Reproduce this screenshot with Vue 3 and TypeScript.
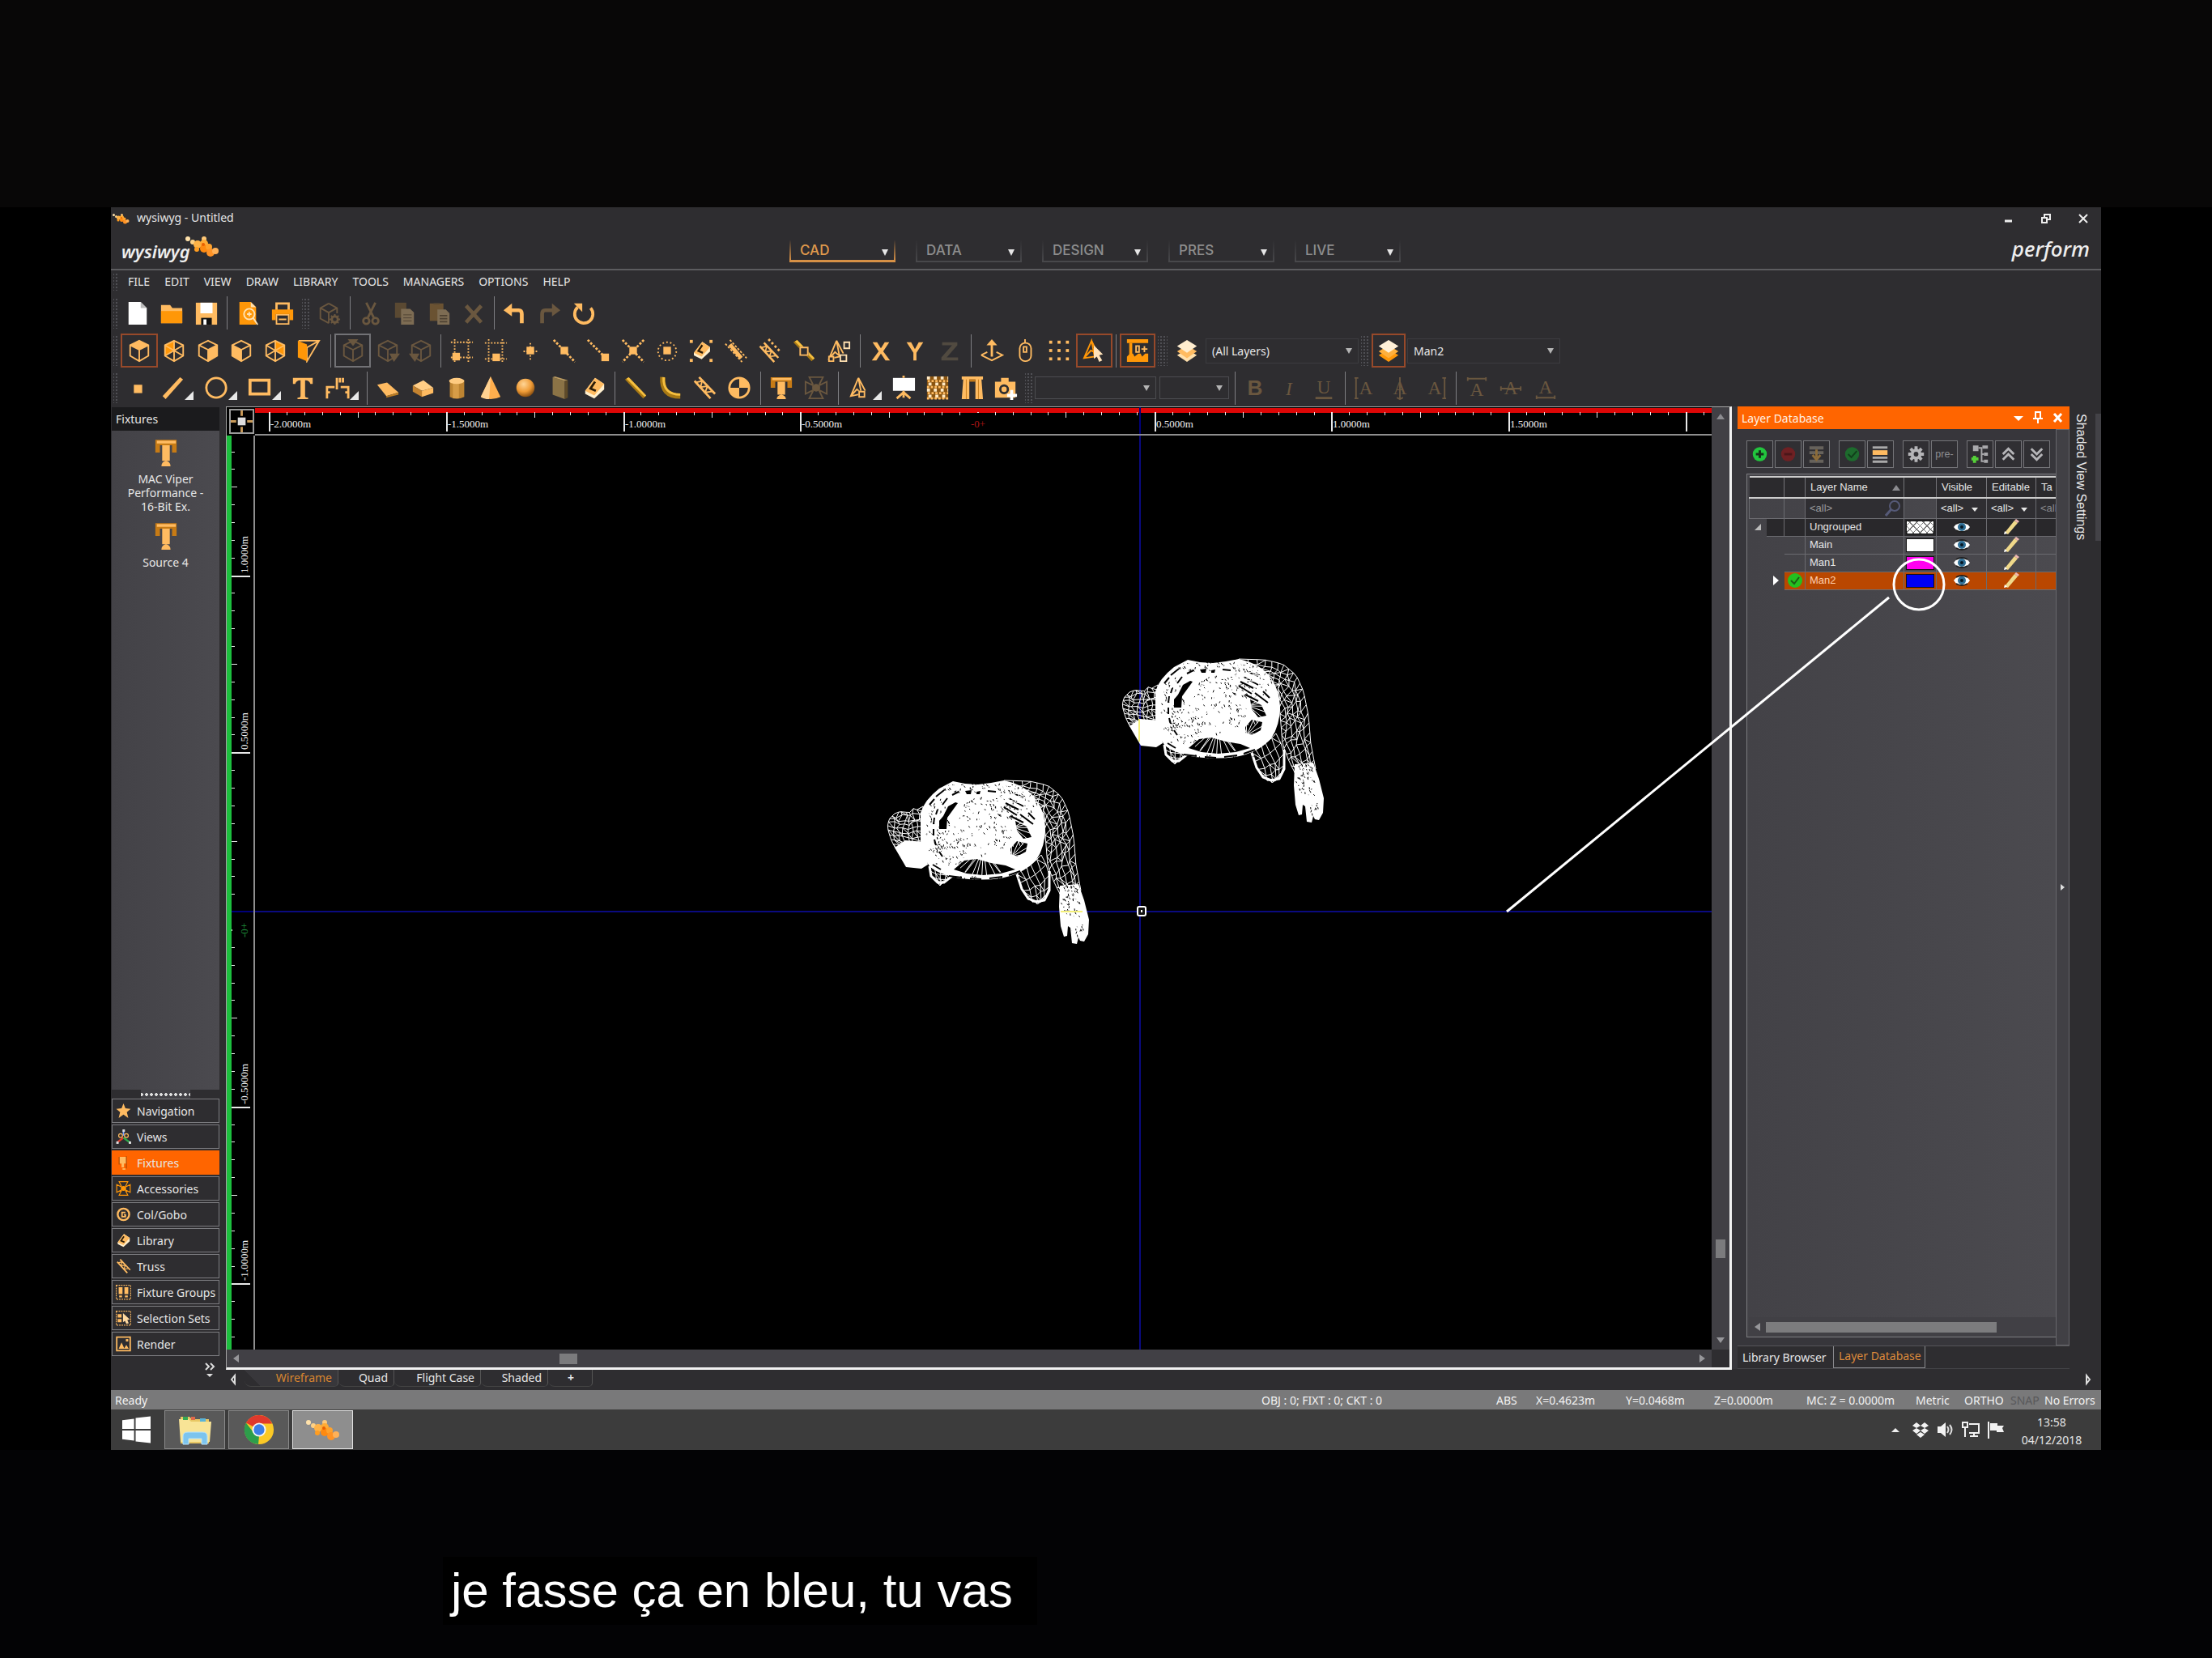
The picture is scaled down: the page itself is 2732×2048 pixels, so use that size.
<script setup lang="ts">
import { ref } from 'vue'

type Point = [number, number]
interface Tool { icon: string; label: string; framed?: string; menu?: boolean }
interface Group { kind: 'tools'; width: number; items: Tool[] }
interface Rule { kind: 'rule'; width: number }
interface Grip { kind: 'grip'; width: number }
interface Combo { kind: 'combo'; width: number; value: string; label: string; tall?: boolean }
type Entry = Group | Rule | Grip | Combo

const A = '#ffbb61'
const O = '#ff9708'
const G = '#6a573f'
const BG = '#2e2d30'

const stroke = (d: string, c = A, w = 2) => `<path d="${d}" fill="none" stroke="${c}" stroke-width="${w}"/>`
const fill = (d: string, c = A) => `<path d="${d}" fill="${c}"/>`
const dash = (d: string, c = A, w = 2, p = '2 2') => `<path d="${d}" fill="none" stroke="${c}" stroke-width="${w}" stroke-dasharray="${p}"/>`
const sq = (x: number, y: number, s = 10, c = A) => `<rect x="${x}" y="${y}" width="${s}" height="${s}" fill="${c}"/>`
const glyph = (t: string, c = G, y = 25, extra = '') => `<text x="16" y="${y}" text-anchor="middle" font-size="25" font-family="Liberation Serif, serif" fill="${c}" ${extra}>${t}</text>`

const hex = 'M16 3 28 9V23L16 30 4 23V9Z'
const cube = (face: string, c = A) => (face ? fill(face, c) : '') + stroke(hex + 'M4 9 16 15 28 9M16 15V30', c)
const wire = (face: string) => fill(face, O) + stroke(hex + 'M4 9 28 23M28 9 4 23M16 3V30', A)
const book = fill('M4 20 17 3 29 11V18L16 30 4 24Z', '#fff0cf') + fill('M4 20 17 3 29 11 16 26Z', A) + stroke('M17 8 11 17 18 20', '#2b1c08', 3)
const beam = fill('M2 5 7 2 30 26 26 30Z', '#a87914') + fill('M4 4 7 2 30 26 28 28Z', '#f5bf3f')
const truss = stroke('M3 7 24 30M9 2 30 24', A, 3) + stroke('M5 9 13 7 11 15 20 14 17 22 26 21', A, 2)
const lamp = fill('M2 2H30V16H24V8H8V16H2Z', '#c77b15') + fill('M4 3H29V6H4Z', A) + fill('M11 8H21V25H11ZM10 31Q10 26 16 25 22 26 22 31Z', A)
const iris = (c: string) => stroke('M12 12 7 2H25L20 12M20 20 25 30H7L12 20M2 8 12 13V19L2 24ZM30 8 20 13V19L30 24Z', c) + `<circle cx="16" cy="16" r="5" fill="${c}"/>`
const cone = stroke('M13 3 3 27 17 24 13 3 22 20M3 27 11 18 18 24', A)
const layers = (top: string, low: string) => fill('M16 14 29 22 16 31 3 22Z', low) + fill('M16 9 29 17 16 26 3 17Z', low === O ? '#ffb03d' : A) + fill('M16 2 29 10 16 19 3 10Z', top)
const splash = `<g><circle cx="3" cy="5" r="3" fill="#ffe2ab"/><circle cx="9" cy="9" r="3" fill="#ffd184"/><circle cx="23" cy="5" r="3" fill="#ffc877"/><circle cx="15" cy="12" r="5" fill="#ffb347"/><circle cx="23" cy="11" r="5" fill="#ffab35"/><circle cx="14" cy="18" r="3" fill="#ff9d20"/><circle cx="23" cy="17" r="5" fill="#ff8a10"/><circle cx="29" cy="15" r="4" fill="#ffa22c"/><circle cx="31" cy="22" r="5" fill="#ff9326"/><circle cx="37" cy="20" r="4" fill="#ffb158"/><circle cx="22" cy="12" r="2" fill="#e85f00"/></g>`

const icons: Record<string, string> = {
  new: fill('M4 1H20L28 9V31H4Z', '#fff') + fill('M20 1 28 9H20Z', '#bbb'),
  open: fill('M2 5H14L17 9H30V29H2Z', A) + fill('M2 13H30V29H2Z', O),
  save: fill('M2 2H30V31H2Z', A) + fill('M8 2H24V16H8Z', '#fff') + fill('M9 22H23V31H9Z', '#111') + fill('M12 24H16V31H12Z', '#fff'),
  preview: fill('M5 1H20L27 8V31H5Z', O) + fill('M20 1 27 8H20Z', '#ffe0ad') + `<circle cx="18" cy="17" r="7" fill="none" stroke="#ffe3b5" stroke-width="2"/>` + stroke('M15 17H21M18 14V20M23 22 29 31', '#ffe3b5'),
  print: stroke('M8 12V3H24V12', A, 3) + fill('M2 11H30V25H2Z', O) + fill('M7 17H25V31H7Z', BG) + stroke('M8 18H24V30H8ZM11 24H21', A),
  cubegear: stroke('M16 3 27 9V16M16 3 5 9V23L16 29M5 9 16 15 27 9M16 15V29', G) + `<circle cx="24" cy="24" r="4" fill="none" stroke="${G}" stroke-width="3"/>` + dash('M24 17V31M17 24H31M19 19 29 29M29 19 19 29', G, 2, '3 8'),
  cut: stroke('M10 2 20 22M22 2 12 22', G, 3) + `<circle cx="10" cy="26" r="4" fill="none" stroke="${G}" stroke-width="3"/><circle cx="22" cy="26" r="4" fill="none" stroke="${G}" stroke-width="3"/>`,
  copy: fill('M3 2H18V22H3Z', '#5a4932') + fill('M11 10H23L28 15V31H11Z', '#7d6c53') + stroke('M14 18H25M14 22H25M14 26H25', '#4d4132', 1),
  paste: fill('M3 3H21V26H3Z', '#6a5232') + fill('M13 11H24L29 16V31H13Z', '#7d6c53') + stroke('M16 19H26M16 23H26M16 27H26M8 3H16', '#4d4132', 2),
  remove: stroke('M6 6 26 28M26 6 6 28', G, 5),
  undo: fill('M1 12 12 3V20Z') + stroke('M10 12H21Q25 12 25 17V29', A, 5),
  redo: fill('M31 12 20 3V20Z', G) + stroke('M22 12H11Q7 12 7 17V29', G, 5),
  repeat: stroke('M8 8A12 12 0 1 0 25 9', A, 4) + fill('M3 3H14V14Z'),
  top: cube('M16 3 28 9 16 15 4 9Z'),
  left: wire('M4 9 16 3V15L4 23Z'),
  front: cube('M16 15 28 9V23L16 30Z'),
  side: cube('M4 9 16 15V30L4 23Z'),
  back: wire('M28 9 16 3V15L28 23Z'),
  persp: stroke('M3 3H30L14 30V12L30 3', A) + fill('M2 3 14 8V30L2 25Z', O),
  cubetop: cube('', G) + fill('M9 1H23L16 10Z', G),
  cubefront: cube('', G) + fill('M18 20H32L24 31Z', G),
  cubeback: cube('', G) + fill('M14 20H0L8 31Z', G),
  snapall: dash('M2 5H31M7 1V31M25 1V31M2 25H31') + sq(4, 19),
  snapin: dash('M2 6H31M7 1V31M25 1V31M2 27H31') + sq(12, 20),
  snappt: dash('M16 6V28M7 17H26') + sq(11, 11),
  snapmid: dash('M2 2 30 31', A, 3, '3 2') + sq(11, 11),
  snapend: dash('M2 2 24 24', A, 3, '3 2') + sq(20, 20),
  snapx: dash('M2 2 30 31M30 2 2 31', A, 3, '3 2') + sq(11, 11),
  snapring: `<circle cx="16" cy="17" r="12" fill="none" stroke="${A}" stroke-width="2" stroke-dasharray="2 3"/>` + sq(11, 11),
  snaplib: `<g transform="translate(3 2) scale(.85)">${book}</g>` + sq(1, 2, 4) + sq(27, 2, 4) + sq(1, 27, 4) + sq(27, 27, 4),
  snapline: stroke('M8 8 23 26', A, 5) + dash('M8 2 30 26M2 7 24 31', A, 2, '3 2'),
  snaptruss: `<g transform="translate(0 4) scale(.9)">${truss}</g>` + dash('M14 1 30 18', A, 3, '3 3'),
  snapbeam: beam + fill('M10 11H22V23H10Z', BG) + stroke('M11 12H21V22H11Z', A, 2),
  snapcone: cone + fill('M18 20H28V30H18ZM2 24H10V31H2Z', BG) + stroke('M3 24H9V30H3Z') + stroke('M23 5H30V13H23ZM18 22H26V30H18Z', '#ffe0b0'),
  x: fill('M5 5H11L16 13 21 5H27L19 17 28 29H22L16 20 10 29H4L13 17Z'),
  y: fill('M5 5H11L16 14 21 5H27L18 19V29H14V19Z'),
  z: fill('M6 5H26V9L12 25H27V29H5V25L19 9H6Z', '#514a40'),
  raise: stroke('M16 6V24', A, 3) + fill('M9 9 16 1 23 9Z') + stroke('M2 22 10 18M22 18 30 22 16 29 2 22'),
  mouse: '<rect x="9" y="6" width="15" height="24" rx="7" fill="none" stroke="#ffbb61" stroke-width="2"/>' + stroke('M16 1V6M14 11H18V18H14Z'),
  grid: [3, 14, 25].map(y => [3, 14, 25].map(x => sq(x, y, 4)).join('')).join(''),
  pick: stroke('M13 3 3 26 17 24ZM3 26 12 16 19 19M13 3 20 18', O) + fill('M16 9 28 21 23 22 27 29 23 31 20 24 16 27Z', '#ffe2b8'),
  measure: fill('M2 1H30V6H2ZM2 24 6 20H10L12 24 17 20H20L22 24 26 20H30V31H2Z', O) + fill('M5 6H9V24H5Z', O) + stroke('M14 10H18V18H14ZM21 14H29M25 10V18'),
  layersall: layers('#ffedcf', '#ffe0ac'),
  layersone: layers('#fff0d8', O),
  dot: sq(11, 12, 11),
  line: fill('M3 27 26 2 30 5 7 31Z'),
  circle: '<ellipse cx="16" cy="16" rx="13" ry="13" fill="none" stroke="#ffbb61" stroke-width="3"/>',
  rect: stroke('M3 6H28V24H3Z', A, 4),
  text: fill('M3 3H29V11H26Q25 6 19 6V27Q19 29 23 29V31H9V29Q13 29 13 27V6Q7 6 6 11H3Z'),
  dims: stroke('M2 30V15H12M20 15H30V30M2 22H6M26 22H30M15 3V18M19 3V9M23 3V9', A, 3),
  floor: fill('M2 12 15 9 30 22 14 27Z') + fill('M14 27 30 22V25L14 29Z', '#b97b24'),
  box: fill('M3 13 17 6 30 16 15 20Z', '#ffcd86') + fill('M3 13 15 20V28L3 21Z', '#c48330') + fill('M15 20 30 16V23L15 28Z', A),
  cyl: fill('M7 6H26V28Q16 33 7 28Z', '#bd8432') + fill('M11 6H19V30H11Z', '#d69c47') + '<ellipse cx="16" cy="7" rx="10" ry="4" fill="#ffcb80"/>',
  cone3: fill('M16 1 29 28Q16 34 3 28Z', '#ffae4d') + fill('M16 1 14 31Q7 31 3 28Z', '#ffd292'),
  ball: '<defs><radialGradient id="ballshade" cx=".4" cy=".3" r=".7"><stop offset="0" stop-color="#ffd596"/><stop offset=".6" stop-color="#ef9b36"/><stop offset="1" stop-color="#8d5212"/></radialGradient></defs><circle cx="16" cy="16" r="12" fill="url(#ballshade)"/>',
  wall: fill('M7 2 23 7V31L7 25Z', '#8b7346') + fill('M7 2 10 1 27 6 23 7Z', '#bd9d62') + fill('M23 7 27 6V29L23 31Z', '#5e4a28'),
  book,
  pipe: beam,
  curve: stroke('M6 2Q4 27 29 27', '#a87914', 7) + stroke('M7 2Q6 25 29 25', '#f5bf3f', 3),
  truss,
  quad: '<circle cx="16" cy="16" r="13" fill="#2e2d30" stroke="#ffbb61" stroke-width="3"/>' + fill('M16 3A13 13 0 0 1 29 16H16ZM16 29A13 13 0 0 1 3 16H16Z'),
  lamp,
  iris: iris(G),
  focus: cone + fill('M13 20H23V30H13Z', BG) + stroke('M14 21H21V28H14Z'),
  screen: fill('M2 3H31V20H2Z', '#fff') + stroke('M16 20V29M16 22 7 30M16 22 25 30M16 0V3', A, 3),
  fabric: fill('M2 1H30V31H2Z', '#8a5410') + dash('M2 3H30M4 11H30M2 19H30M4 27H30', '#ffe9c4', 4, '4 5') + dash('M3 7H30M2 15H30M3 23H30M2 30H30', A, 3, '3 2'),
  drape: fill('M3 1H31V5H3ZM5 5H13V31H3ZM21 5H29L31 31H21Z') + fill('M13 5H21V8H13Z', '#c47b1a') + stroke('M9 5V31M25 5V31', '#c47b1a', 1),
  camera: fill('M2 8H10V3H20V8H29V29H2Z') + '<ellipse cx="14" cy="18" rx="5" ry="5" fill="none" stroke="#2e2d30" stroke-width="3"/>' + stroke('M24 19V32M18 26H31', '#fff', 4),
  bold: `<text x="16" y="26" text-anchor="middle" font-size="28" font-weight="700" font-family="Liberation Sans, sans-serif" fill="${G}">B</text>`,
  italic: glyph('I', G, 26, 'font-style="italic"'),
  under: glyph('U', G, 23) + fill('M5 28H27V31H5Z', G),
  alignl: glyph('A') + stroke('M3 3V30M1 3H6M1 30H6', G),
  alignc: glyph('A') + stroke('M16 2V31M12 29 16 31 20 29', G),
  alignr: glyph('A') + stroke('M29 3V30M26 3H31M26 30H31', G),
  vtop: glyph('A', G, 27) + stroke('M4 4H28M4 2V7M28 2V7', G),
  vmid: glyph('A') + stroke('M3 17H29M3 14V20M29 14V20', G),
  vbot: glyph('A', G, 23) + stroke('M4 29H28M4 26V31M28 26V31', G),
  star: fill('M16 1 20 11 31 12 23 19 26 31 16 24 6 31 9 19 1 12 12 11Z'),
  axes: stroke('M16 14V3', '#7da5ff', 3) + stroke('M16 18 3 28', '#e23b2b', 4) + stroke('M16 18 29 28', '#2ca84a', 4) + '<circle cx="10" cy="14" r="4" fill="none" stroke="#ffbb61" stroke-width="2"/><circle cx="22" cy="14" r="4" fill="none" stroke="#ffbb61" stroke-width="2"/>' + sq(1, 26, 5, '#ddd') + sq(27, 26, 5, '#ddd') + sq(14, 1, 5, '#ddd'),
  lampsmall: fill('M7 4H22V18H17V26H12V18H7Z', A) + stroke('M7 4V20M22 3V28', '#b04a00', 2) + fill('M14 28H20V31H14Z'),
  irisA: iris(O),
  gobo: `<circle cx="16" cy="16" r="12" fill="none" stroke="${A}" stroke-width="4"/>` + stroke('M20 12H13V21H20V17H17', A, 3),
  groups: dash('M1 2H31V31H1Z', A, 2, '3 2') + fill('M6 6H14V20H6ZM18 6H26V20H18ZM7 23H13V27H7ZM19 23H25V27H19Z'),
  sets: dash('M1 2H31V31H1Z', A, 2, '3 2') + fill('M4 8H12V15H4ZM4 18H12V25H4Z') + fill('M15 6 29 19 24 20 27 27 22 28 19 22 15 25Z', '#ffd9a0'),
  render: stroke('M2 2H30V30H2Z', A, 3) + fill('M6 26 12 13 18 26ZM17 26 22 18 27 26Z') + sq(21, 6, 5),
}

const t = (icon: string, label: string, opt: Partial<Tool> = {}): Tool => ({ icon, label, ...opt })
const group = (width: number, ...items: Tool[]): Group => ({ kind: 'tools', width, items })
const rule = (width: number): Rule => ({ kind: 'rule', width })
const grip = (width: number): Grip => ({ kind: 'grip', width })

const toolbars: { name: string; entries: Entry[] }[] = [
  {
    name: 'standard', entries: [
      group(127, t('new', 'New'), t('open', 'Open'), t('save', 'Save')), rule(9),
      group(85, t('preview', 'Preview'), t('print', 'Print')), grip(15),
      group(42, t('cubegear', 'Object settings')), rule(10),
      group(169, t('cut', 'Cut'), t('copy', 'Copy'), t('paste', 'Paste'), t('remove', 'Delete')), rule(9),
      group(127, t('undo', 'Undo'), t('redo', 'Redo'), t('repeat', 'Repeat')),
    ],
  },
  {
    name: 'snapping', entries: [
      group(253, t('top', 'Top', { framed: 'hot' }), t('left', 'Left'), t('front', 'Front'), t('side', 'Right'), t('back', 'Back'), t('persp', 'Perspective')), rule(11),
      group(127, t('cubetop', 'Align top', { framed: 'cold' }), t('cubefront', 'Align front'), t('cubeback', 'Align back')), rule(9),
      group(508, t('snapall', 'Snap grid'), t('snapin', 'Snap inside'), t('snappt', 'Snap point'), t('snapmid', 'Snap middle'), t('snapend', 'Snap end'), t('snapx', 'Snap crossing'), t('snapring', 'Snap centre'), t('snaplib', 'Snap library'), t('snapline', 'Snap line'), t('snaptruss', 'Snap truss'), t('snapbeam', 'Snap pipe'), t('snapcone', 'Snap focus')), rule(10),
      group(127, t('x', 'Lock X'), t('y', 'Lock Y'), t('z', 'Lock Z')), rule(10),
      group(170, t('raise', 'Raise'), t('mouse', 'Mouse'), t('grid', 'Grid'), t('pick', 'Pick', { framed: 'hot' })), rule(9),
      group(44, t('measure', 'Rulers', { framed: 'hot' })), grip(18),
      group(42, t('layersall', 'Layers')),
      { kind: 'combo', width: 189, value: '(All Layers)', label: 'Shown layers', tall: true }, grip(16),
      group(42, t('layersone', 'Current layer', { framed: 'hot' })),
      { kind: 'combo', width: 189, value: 'Man2', label: 'Current layer', tall: true },
    ],
  },
  {
    name: 'draw', entries: [
      group(42, t('dot', 'Point')),
      group(162, t('line', 'Line', { menu: true }), t('circle', 'Circle', { menu: true }), t('rect', 'Rectangle', { menu: true })),
      group(42, t('text', 'Text')),
      group(54, t('dims', 'Dimension', { menu: true })), rule(9),
      group(297, t('floor', 'Surface'), t('box', 'Box'), t('cyl', 'Cylinder'), t('cone3', 'Cone'), t('ball', 'Sphere'), t('wall', 'Wall'), t('book', 'Library')), rule(9),
      group(170, t('pipe', 'Pipe'), t('curve', 'Bent pipe'), t('truss', 'Truss'), t('quad', 'Motor')), rule(10),
      group(85, t('lamp', 'Fixture'), t('iris', 'Accessory')), rule(12),
      group(54, t('focus', 'Focus', { menu: true })),
      group(168, t('screen', 'Screen'), t('fabric', 'Fabric'), t('drape', 'Drape'), t('camera', 'Camera')), grip(15),
      { kind: 'combo', width: 150, value: '', label: 'Font' },
      { kind: 'combo', width: 86, value: '', label: 'Font size' }, rule(7),
      group(127, t('bold', 'Bold'), t('italic', 'Italic'), t('under', 'Underline')), rule(10),
      group(127, t('alignl', 'Align left'), t('alignc', 'Align centre'), t('alignr', 'Align right')), rule(10),
      group(127, t('vtop', 'Align top'), t('vmid', 'Align middle'), t('vbot', 'Align bottom')),
    ],
  },
]

const modes = ['CAD', 'DATA', 'DESIGN', 'PRES', 'LIVE']
const activeMode = ref('CAD')
const menus = ['FILE', 'EDIT', 'VIEW', 'DRAW', 'LIBRARY', 'TOOLS', 'MANAGERS', 'OPTIONS', 'HELP']
const shortcuts: [string, string][] = [
  ['Navigation', 'star'], ['Views', 'axes'], ['Fixtures', 'lampsmall'], ['Accessories', 'irisA'], ['Col/Gobo', 'gobo'],
  ['Library', 'book'], ['Truss', 'truss'], ['Fixture Groups', 'groups'], ['Selection Sets', 'sets'], ['Render', 'render'],
]
const activeShortcut = ref('Fixtures')
const views: [string, number][] = [['Wireframe', 116], ['Quad', 69], ['Flight Case', 107], ['Shaded', 83], ['+', 55]]
const activeView = ref('Wireframe')
const status: [string, number][] = [
  ['OBJ : 0; FIXT : 0; CKT : 0', 290], ['ABS', 49], ['X=0.4623m', 111], ['Y=0.0468m', 109], ['Z=0.0000m', 114],
  ['MC: Z = 0.0000m', 135], ['Metric', 60], ['ORTHO', 57], ['SNAP', 42], ['No Errors', 70],
]

const layerRows = [
  { name: 'Ungrouped', fill: 'hatch', kind: 'head' },
  { name: 'Main', fill: 'white', kind: '' },
  { name: 'Man1', fill: 'magenta', kind: '' },
  { name: 'Man2', fill: 'blue', kind: 'current' },
]
const panelGroups: { name: string; art: string }[][] = [
  [
    { name: 'Add layer', art: '<circle cx="16" cy="16" r="9" fill="#22c53e"/><path d="M11 16H21M16 11V21" stroke="#17301b" stroke-width="3"/>' },
    { name: 'Remove layer', art: '<circle cx="16" cy="16" r="9" fill="#6f2023"/><path d="M11 16H21" stroke="#4a1719" stroke-width="3"/>' },
    { name: 'Merge layers', art: '<path d="M7 6H25V10H7ZM7 12H25V16H7ZM7 23H25V27H7Z" fill="#66625c"/><path d="M16 10V20M11 17 16 23 21 17" fill="none" stroke="#8c6c3a" stroke-width="3"/>' },
  ],
  [
    { name: 'Set current', art: '<circle cx="16" cy="16" r="9" fill="#1d6b2d"/><path d="M11 16 15 20 22 12" fill="none" stroke="#123d1b" stroke-width="2"/>' },
    { name: 'Group layers', art: '<path d="M6 6H25V9H6Z" fill="#aaa"/><path d="M6 11H25V17H6Z" fill="#ffbb61"/><path d="M6 19H25V22H6ZM6 24H25V27H6Z" fill="#aaa"/>' },
  ],
  [
    { name: 'Settings', art: '<circle cx="16" cy="16" r="5" fill="none" stroke="#b5b5b8" stroke-width="4"/><path d="M16 6V10M16 22V26M6 16H10M22 16H26M9 9 12 12M20 20 23 23M23 9 20 12M12 20 9 23" stroke="#b5b5b8" stroke-width="4"/>' },
    { name: 'Prefix', art: '<text x="16" y="20" text-anchor="middle" font-size="13" font-family="Liberation Sans, sans-serif" fill="#8d8d90">pre-</text>' },
  ],
  [
    { name: 'New group', art: '<path d="M7 5H14V12H7ZM19 5H26V9H19ZM21 14H26V18H21ZM21 23H26V27H21Z" fill="#a9a9ac"/><path d="M14 8H18V25H21M18 16H21" fill="none" stroke="#a9a9ac" stroke-width="2"/><path d="M5 22H14M9 18V27" stroke="#55d038" stroke-width="4"/>' },
    { name: 'Collapse all', art: '<path d="M9 16 16 9 23 16M9 23 16 16 23 23" fill="none" stroke="#b5b5b8" stroke-width="3"/>' },
    { name: 'Expand all', art: '<path d="M9 9 16 16 23 9M9 16 16 23 23 16" fill="none" stroke="#b5b5b8" stroke-width="3"/>' },
  ],
]

// Rulers: half a metre spans STEP pixels and holds ten divisions.
const STEP = 218.7
const zeroX = 892
const zeroY = 610
const rulerX: { x: number; h: number }[] = []
for (let i = -40; i <= 42; i++) rulerX.push({ x: Math.round(zeroX + (i * STEP) / 10), h: i % 10 === 0 ? 24 : i % 5 === 0 ? 7 : 4 })
const rulerY: { y: number; w: number }[] = []
for (let i = -28; i <= 24; i++) rulerY.push({ y: Math.round(zeroY + (i * STEP) / 10), w: i % 10 === 0 ? 23 : i % 5 === 0 ? 7 : 4 })
const labelsX = [-2, -1.5, -1, -0.5, 0.5, 1, 1.5].map(v => ({ x: Math.round(zeroX + v * 2 * STEP), s: v.toFixed(4) + 'm' }))
const labelsY = [1, 0.5, -0.5, -1].map(v => ({ y: Math.round(zeroY - v * 2 * STEP), s: v.toFixed(4) + 'm' }))

// Wireframe figure seen from above.
let seed = 7
const rnd = () => { seed = (seed * 16807) % 2147483647; return seed / 2147483647 }
const along = (line: Point[], u: number): Point => {
  const f = u * (line.length - 1)
  const i = Math.min(Math.floor(f), line.length - 2)
  const k = f - i
  return [line[i][0] + (line[i + 1][0] - line[i][0]) * k, line[i][1] + (line[i + 1][1] - line[i][1]) * k]
}
const mesh = (a: Point[], b: Point[], cols: number, rows: number, jitter: number): string => {
  const pts: Point[][] = []
  for (let r = 0; r <= rows; r++) {
    const p = along(a, r / rows)
    const q = along(b, r / rows)
    const row: Point[] = []
    for (let c = 0; c <= cols; c++) {
      const k = c / cols
      const j = c === 0 || c === cols ? 0 : jitter
      row.push([p[0] + (q[0] - p[0]) * k + (rnd() - 0.5) * j, p[1] + (q[1] - p[1]) * k + Math.sin(k * 3.14) * 3 + (rnd() - 0.5) * j])
    }
    pts.push(row)
  }
  const s = (p: Point) => p[0].toFixed(1) + ' ' + p[1].toFixed(1)
  let d = pts.map(r => 'M' + r.map(s).join('L')).join('')
  for (let c = 0; c <= cols; c++) d += 'M' + pts.map(r => s(r[c])).join('L')
  for (let r = 0; r < rows; r++) for (let c = 0; c < cols; c++) if (rnd() > 0.62) d += 'M' + s(pts[r][c]) + 'L' + s(pts[r + 1][c + 1])
  return d
}
const specks = (cx: number, cy: number, rx: number, ry: number, n: number): string => {
  let d = ''
  for (let i = 0; i < n; i++) {
    const a = rnd() * 6.283
    const k = Math.sqrt(rnd())
    d += `M${(cx + Math.cos(a) * rx * k).toFixed(1)} ${(cy + Math.sin(a) * ry * k).toFixed(1)}l${(rnd() * 3 - 1).toFixed(1)} ${(rnd() * 3).toFixed(1)}`
  }
  return d
}
const fan = (x: number, y: number, r0: number, r1: number, a0: number, a1: number, n: number, fy = 1): string => {
  let d = ''
  for (let i = 0; i <= n; i++) {
    const a = a0 + ((a1 - a0) * i) / n
    const b = a + (rnd() - 0.5) * 0.18
    d += `M${(x + Math.cos(a) * r0).toFixed(1)} ${(y + Math.sin(a) * r0 * fy).toFixed(1)}L${(x + Math.cos(b) * r1).toFixed(1)} ${(y + Math.sin(b) * r1 * fy).toFixed(1)}`
  }
  return d
}
const armMesh = mesh(
  [[140, 24], [166, 28], [186, 40], [194, 56], [196, 80], [198, 105], [206, 126], [216, 146]],
  [[144, 0], [176, 1], [198, 6], [215, 20], [224, 40], [230, 70], [233, 105], [239, 136]], 6, 20, 5)
const shoulderMesh = mesh([[9, 41], [2, 48], [0, 58], [4, 72], [10, 84]], [[44, 32], [44, 46], [44, 60], [44, 74], [44, 88]], 7, 9, 5)
const footMesh = mesh([[52, 106], [54, 118], [62, 127]], [[82, 108], [76, 122], [68, 127]], 4, 4, 2)
const legMesh = mesh([[160, 116], [166, 134], [174, 146], [182, 150]], [[190, 92], [200, 112], [200, 136], [190, 150]], 5, 5, 4)
const torso = 'M41 40Q46 24 64 10L81 1 96 4 112 5 128 3 144 0Q172 6 184 24 194 38 195 58 195 82 184 98 168 116 140 121 118 124 90 121 62 116 52 106 40 90 41 70Z'
const holes = 'M84 27 75 32 69 44 64 50 64 60 73 60 74 46 87 28ZM158 50 172 57 178 70 168 72 160 62ZM152 84 160 75 173 78 171 88 160 94 152 91ZM82 110 95 99 110 97 128 102 146 105 158 110 140 115 118 117 98 115ZM96 13 104 12 103 17 98 17ZM110 14 115 13 114 17 110 17Z'
const gaps = 'M60 42 62 36M57 54 58 46M57 68 57 60M60 80 58 73M68 94 64 88M68 30 74 22M80 18 88 14M124 13 134 14M150 22 168 32M146 28 162 36M144 33 160 43M152 44 168 52M164 42 180 54M174 40 182 48M156 16 168 21M60 20 70 12M52 30 58 23M56 104 66 110M76 118 92 120M102 121 116 122M126 121 142 119M150 117 164 112'
const spokes = fan(118, 84, 12, 38, 0.35, 2.8, 14, 0.95) + fan(156, 58, 0, 24, -0.5, 1.6, 7) + fan(154, 94, 0, 24, -1.9, 0.1, 6)
const headSpecks = specks(118, 56, 38, 38, 120) + specks(62, 62, 14, 42, 70) + specks(118, 9, 52, 6, 50) + specks(158, 30, 28, 18, 60) + specks(80, 88, 22, 18, 50) + specks(118, 120, 50, 2, 14)
const hand = 'M213 130 236 128 243 148 249 172 248 190 243 199 238 198 236 194 234 202 228 201 226 182 223 180 222 192 218 193 214 180 212 156Z'
const handSpecks = specks(226, 146, 12, 20, 54) + specks(236, 178, 9, 14, 14)
const figures: Point[] = [[1071, 276], [781, 426]]
</script>

<template>
  <div class="page">
    <main class="window">
      <header class="titlebar">
        <svg class="appicon" viewBox="0 0 42 28" v-html="splash" />
        <h1>wysiwyg - Untitled</h1>
        <button aria-label="Minimise"><svg viewBox="0 0 16 16"><path d="M3 11H12" stroke="#eee" stroke-width="3" /></svg></button>
        <button aria-label="Restore"><svg viewBox="0 0 16 16"><path d="M6 6V3H13V9H10M3 7H9V13H3Z" fill="none" stroke="#eee" stroke-width="2" /></svg></button>
        <button aria-label="Close"><svg viewBox="0 0 16 16"><path d="M3 3 13 13M13 3 3 13" stroke="#eee" stroke-width="2" /></svg></button>
      </header>
      <div class="brand">
        <div class="logo"><span>wysiwyg</span><svg viewBox="0 0 42 28" v-html="splash" /></div>
        <nav class="modes">
          <button v-for="m in modes" :key="m" :class="{ on: m === activeMode }" @click="activeMode = m">{{ m }}<i class="down" /></button>
        </nav>
        <span class="edition">perform</span>
      </div>
      <nav class="menubar">
        <i class="grip" />
        <button v-for="m in menus" :key="m">{{ m }}</button>
      </nav>
      <div v-for="bar in toolbars" :key="bar.name" class="toolbar" :class="bar.name">
        <i class="grip" />
        <template v-for="(e, n) in bar.entries" :key="n">
          <div v-if="e.kind === 'tools'" class="tools" :style="{ width: e.width + 'px' }">
            <button v-for="b in e.items" :key="b.icon" :aria-label="b.label" :class="[b.framed, { menu: b.menu }]">
              <svg viewBox="0 0 32 32" v-html="icons[b.icon]" />
            </button>
          </div>
          <i v-else-if="e.kind === 'rule'" class="rule" :style="{ width: e.width + 'px' }" />
          <i v-else-if="e.kind === 'grip'" class="grip" :style="{ width: e.width + 'px' }" />
          <label v-else class="combo" :class="{ tall: e.tall }" :style="{ width: e.width + 'px' }">
            <select :aria-label="e.label"><option>{{ e.value }}</option></select><i class="down" />
          </label>
        </template>
      </div>

      <div class="work">
        <aside class="sidebar">
          <h2>Fixtures</h2>
          <div class="library">
            <figure><svg viewBox="0 0 32 32" preserveAspectRatio="none" v-html="lamp" /><figcaption>MAC Viper Performance - 16-Bit Ex.</figcaption></figure>
            <figure><svg viewBox="0 0 32 32" preserveAspectRatio="none" v-html="lamp" /><figcaption>Source 4</figcaption></figure>
          </div>
          <i class="handle" />
          <button v-for="s in shortcuts" :key="s[0]" class="shortcut" :class="{ on: s[0] === activeShortcut }" @click="activeShortcut = s[0]">
            <svg viewBox="0 0 32 32" v-html="icons[s[1]]" />{{ s[0] }}
          </button>
          <div class="more"><svg viewBox="0 0 14 24"><path d="M2 3 6 7 2 11M8 3 12 7 8 11" fill="none" stroke="#ddd" stroke-width="2" /><path d="M3 16H11L7 20Z" fill="#ddd" /></svg></div>
        </aside>

        <section class="drawing">
          <div class="viewport">
            <div class="corner"><svg viewBox="0 0 28 28"><path d="M14 0V7M14 21V28M0 14H7M21 14H28" stroke="#c99a58" stroke-width="3" /><rect x="9" y="9" width="10" height="10" fill="#ddd" /></svg></div>
            <svg class="ruler-x">
              <rect width="100%" height="6" y="1" fill="#dd0606" />
              <rect v-for="k in rulerX" :key="k.x" :x="k.x" y="6" :width="k.h > 10 ? 2 : 1" :height="k.h" fill="#e8e8e8" />
              <text v-for="l in labelsX" :key="l.s" :x="l.x + 2" y="25">{{ l.s }}</text>
              <rect :x="zeroX - 2" y="7" width="4" height="26" fill="#000" />
              <text :x="zeroX - 8" y="25" class="zero">-0+</text>
              <rect x="1092" y="0" width="2" height="34" fill="#00007a" />
            </svg>
            <svg class="ruler-y">
              <rect width="6" height="100%" fill="#1cbf3e" />
              <rect v-for="k in rulerY" :key="k.y" x="6" :y="k.y" :width="k.w" :height="k.w > 10 ? 2 : 1" fill="#e8e8e8" />
              <rect x="7" :y="zeroY - 2" width="26" height="4" fill="#000" />
              <text v-for="l in labelsY" :key="l.s" :transform="`translate(26 ${l.y - 3}) rotate(-90)`">{{ l.s }}</text>
              <text :transform="`translate(26 ${zeroY + 10}) rotate(-90)`" class="zero-y">-0+</text>
              <rect x="6" y="587" width="28" height="2" fill="#00007a" />
            </svg>
            <svg class="canvas">
              <rect x="1092" y="0" width="2" height="100%" fill="#0a0a80" />
              <rect x="0" y="587" width="100%" height="2" fill="#0a0a80" />
              <g v-for="f in figures" :key="f[0]" :transform="`translate(${f[0]} ${f[1]})`">
                <path :d="shoulderMesh" class="mesh" />
                <path d="M9 83 22 74 46 76 50 104 42 109 23 107Z" fill="#fff" />
                <path :d="footMesh" class="mesh" />
                <path :d="legMesh" class="mesh" />
                <path d="M160 116 166 134 174 146 184 150 194 148 200 136 200 112M52 106 54 118 62 126 70 126 80 118" class="edge" />
                <path :d="torso" fill="#fff" />
                <path :d="holes" fill="#000" />
                <path :d="spokes" class="mesh" />
                <path :d="gaps" class="gap" />
                <path :d="headSpecks" class="speck" />
                <path :d="armMesh" class="mesh" />
                <path :d="hand" fill="#fff" />
                <path :d="handSpecks" class="speck" />
              </g>
              <path d="M1092 350V378" stroke="#f4f07a" stroke-width="2" /><path d="M995 588H1022" stroke="#f4f07a" stroke-width="2" />
              <rect x="1090" y="582" width="10" height="11" rx="2" fill="#111" stroke="#fff" stroke-width="2" /><rect x="1094" y="586" width="2" height="3" fill="#fff" />
            </svg>
            <div class="scroll-y"><i class="up" /><b /><i class="down" /></div>
            <div class="scroll-x"><i class="prev" /><b /><i class="next" /></div>
          </div>
          <nav class="views">
            <svg viewBox="0 0 12 16"><path d="M8 3V13L4 8Z" fill="none" stroke="#ddd" stroke-width="2" /></svg>
            <button v-for="v in views" :key="v[0]" :class="{ on: v[0] === activeView }" :style="{ width: v[1] + 'px' }" @click="activeView = v[0]">{{ v[0] }}</button>
          </nav>
        </section>

        <section class="panel">
          <h2><span>Layer Database</span>
            <svg viewBox="0 0 66 20"><path d="M4 8H16L10 14Z" fill="#fff" /><path d="M31 3H37V11H31ZM28 11H40M34 11V17" fill="none" stroke="#fff" stroke-width="2" /><path d="M54 5 63 15M63 5 54 15" stroke="#fff" stroke-width="3" /></svg>
          </h2>
          <div class="panel-body">
            <div class="panel-main">
              <div class="panel-tools">
                <div v-for="(g, i) in panelGroups" :key="i">
                  <button v-for="b in g" :key="b.name" :aria-label="b.name"><svg viewBox="0 0 32 32" v-html="b.art" /></button>
                </div>
              </div>
              <div class="tablebox">
                <table>
                  <colgroup><col class="c1"><col class="c2"><col class="c3"><col class="c4"><col class="c5"><col class="c6"><col class="c7"><col class="c8"></colgroup>
                  <thead>
                    <tr class="heads"><th colspan="2" /><th /><th class="name">Layer Name<i class="up" /></th><th /><th>Visible</th><th>Editable</th><th>Ta</th></tr>
                    <tr class="filters">
                      <td colspan="2" /><td />
                      <td class="dark"><input aria-label="Filter layer name" placeholder="&lt;all&gt;"><svg viewBox="0 0 20 20"><circle cx="12" cy="7" r="6" fill="none" stroke="#565a78" stroke-width="2" /><path d="M8 11 1 19" stroke="#565a78" stroke-width="3" /></svg></td>
                      <td />
                      <td class="dark"><select aria-label="Filter visible"><option>&lt;all&gt;</option></select><i class="down" /></td>
                      <td class="dark"><select aria-label="Filter editable"><option>&lt;all&gt;</option></select><i class="down" /></td>
                      <td class="dark faint">&lt;all&gt;</td>
                    </tr>
                  </thead>
                  <tbody>
                    <tr v-for="r in layerRows" :key="r.name" :class="r.kind">
                      <td class="bare"><svg v-if="r.kind === 'head'" viewBox="0 0 20 20"><path d="M14 6V14H6Z" fill="#bbb" /></svg></td>
                      <td class="fold"><svg v-if="r.kind === 'current'" viewBox="0 0 20 20"><path d="M7 4V16L14 10Z" fill="#fff" /></svg></td>
                      <td><svg v-if="r.kind === 'current'" viewBox="0 0 20 20"><circle cx="10" cy="10" r="9" fill="#23c020" /><path d="M5 10 9 14 15 6" fill="none" stroke="#1c5a14" stroke-width="2" /></svg></td>
                      <td class="name">{{ r.name }}</td>
                      <td class="swatch"><i :class="r.fill" /></td>
                      <td class="mid"><svg viewBox="0 0 20 20"><path d="M0 10Q4 4 10 4 16 4 20 10 16 16 10 16 4 16 0 10Z" fill="#fff" /><path d="M3 6Q10 2 17 6M3 14Q10 18 17 14" fill="none" stroke="#222" stroke-width="2" /><circle cx="10" cy="10" r="5" fill="#2d6d94" /><circle cx="10" cy="10" r="2" fill="#061723" /></svg></td>
                      <td class="mid"><svg viewBox="0 0 20 20"><path d="M2 17 14 2 18 5 6 19Z" fill="#f0d98a" /><path d="M1 19 2 15 5 18Z" fill="#fff" /><path d="M14 2 16 0 20 3 18 5Z" fill="#f0b9b4" /></svg></td>
                      <td />
                    </tr>
                  </tbody>
                </table>
                <div class="panel-scroll"><i class="prev" /><b /></div>
              </div>
            </div>
            <div class="splitter"><i class="next" /></div>
          </div>
          <nav class="panel-tabs"><button>Library Browser</button><button class="on">Layer Database</button></nav>
          <div class="panel-foot"><svg viewBox="0 0 12 16"><path d="M4 3V13L8 8Z" fill="none" stroke="#ddd" stroke-width="2" /></svg></div>
        </section>
        <aside class="strip"><button>Shaded View Settings</button><i /></aside>
      </div>

      <footer class="status">
        <span class="ready">Ready</span>
        <span v-for="s in status" :key="s[0]" :class="{ faint: s[0] === 'SNAP' }" :style="{ width: s[1] + 'px' }">{{ s[0] }}</span>
      </footer>
      <div class="taskbar">
        <button class="start" aria-label="Start"><svg viewBox="0 0 36 34"><path d="M0 5 15 3V16H0ZM17 2 36 0V16H17ZM0 18H15V31L0 29ZM17 18H36V34L17 32Z" fill="#fff" /></svg></button>
        <button class="task" aria-label="Files"><svg viewBox="0 0 42 38"><path d="M3 3H14L17 6H38V36H3Z" fill="#e8c764" /><path d="M1 6H13L16 9H41L39 34H3Z" fill="#f8e496" /><path d="M6 3H12V7H6Z" fill="#35a853" /><path d="M16 3H21V7H16Z" fill="#e06a4a" /><path d="M27 5H34V9H27Z" fill="#5ab4d8" /><path d="M6 37V27Q6 22 12 22H30Q36 22 36 27V37H29V30H13V37Z" fill="#7cc4ee" stroke="#b9e4fb" /></svg></button>
        <button class="task" aria-label="Browser"><svg viewBox="0 0 40 40"><circle cx="20" cy="20" r="19" fill="#fbc926" /><path d="M20 20 3 11A19 19 0 0 1 37 12H20Z" fill="#e0392c" /><path d="M20 28 19 39A19 19 0 0 1 3 11L13 24Z" fill="#2d9e4b" /><circle cx="20" cy="20" r="9" fill="#f6f6f6" /><circle cx="20" cy="20" r="7" fill="#3d7fe6" /></svg></button>
        <button class="task on" aria-label="wysiwyg"><svg viewBox="0 0 42 28" v-html="splash" /></button>
        <div class="tray">
          <svg viewBox="0 0 24 24"><path d="M7 15H17L12 10Z" fill="#eee" /></svg>
          <svg viewBox="0 0 24 24"><path d="M7 3 12 7 7 10 2 7ZM17 3 22 7 17 10 12 7ZM7 10 12 13 7 17 2 13ZM17 10 22 13 17 17 12 13ZM12 15 17 18 12 22 7 18Z" fill="#f2f2f2" /></svg>
          <svg viewBox="0 0 24 24"><path d="M2 8H6L12 3V21L6 16H2Z" fill="#f2f2f2" /><path d="M14 8Q17 12 14 16M17 6Q22 12 17 18" fill="none" stroke="#ddd" stroke-width="2" /></svg>
          <svg viewBox="0 0 24 24"><path d="M10 5H22V16H10M16 16V20M11 20H21M5 9V21M2 3H8V9H2Z" fill="none" stroke="#f2f2f2" stroke-width="2" /></svg>
          <svg viewBox="0 0 24 24"><path d="M3 2V23" stroke="#f2f2f2" stroke-width="2" /><path d="M5 4H14V7H22L20 10 22 15H13V13H5Z" fill="#f2f2f2" /></svg>
          <time><span>13:58</span><span>04/12/2018</span></time>
        </div>
      </div>
      <svg class="callout" viewBox="0 0 800 1000"><circle cx="575" cy="466" r="31" /><path d="M538 482 66 870" /></svg>
    </main>
    <div class="below"><p class="caption">je fasse ça en bleu, tu vas</p></div>
  </div>
</template>

<style>
body { margin: 0; background: #000; }
</style>

<style scoped>
* { box-sizing: border-box; }
h1, h2, p, figure { margin: 0; font-weight: 400; font-size: 14px; }
button, select, input { font: inherit; color: inherit; background: none; border: 0; padding: 0; margin: 0; }
select, input { appearance: none; min-width: 0; outline: 0; }
svg { display: block; }
.page { min-height: 100vh; display: flex; flex-direction: column; padding-top: 256px; background: linear-gradient(#080707 0 256px, #000 256px 1791px, #030305 1791px); font-family: "Noto Sans", "Open Sans", sans-serif; font-size: 14px; color: #e6e6e6; }
.window { position: relative; flex: 1; margin: 0 137px; background: #2e2d30; display: flex; flex-direction: column; overflow: hidden; }
.below { height: 257px; padding: 132px 547px 0; }
.caption { width: max-content; height: 84px; padding: 0 30px 0 10px; background: #000; color: #fff; font: 60px/84px "Liberation Sans", sans-serif; white-space: nowrap; }

i.up, i.down, i.prev, i.next { display: block; width: 0; height: 0; border: 5px solid transparent; }
i.down { border-top: 8px solid #e6e6e6; border-bottom: 0; }
i.up { border-bottom: 7px solid #8c8c90; border-top: 0; }
i.prev { border-right: 7px solid #96969a; border-left: 0; }
i.next { border-left: 7px solid #96969a; border-right: 0; }
.grip { display: block; width: 12px; height: 38px; flex: none; background: radial-gradient(#505055 1px, transparent 1px) 2px 0 / 4px 4px content-box; padding: 0 3px; }

.titlebar { height: 28px; display: flex; align-items: center; padding-right: 14px; }
.appicon { width: 21px; height: 16px; margin: 0 9px 0 2px; }
.titlebar h1 { flex: 1; line-height: 18px; padding-bottom: 2px; }
.titlebar button { width: 16px; height: 16px; margin-left: 30px; }
.titlebar button svg { width: 16px; height: 16px; }
.brand { height: 50px; display: flex; border-bottom: 2px solid #5c5c5f; }
.logo { width: 838px; display: flex; align-items: flex-start; padding-left: 13px; font: italic 600 22px/30px "Noto Sans", sans-serif; color: #eee; }
.logo span { padding-top: 11px; }
.logo svg { width: 42px; height: 28px; margin: 6px 0 0 -6px; }
.modes { display: flex; gap: 25px; flex: 1; padding-top: 13px; font: 500 17px/30px Inter, sans-serif; color: #8d8d8d; }
.modes button { width: 131px; height: 27px; display: flex; align-items: center; justify-content: space-between; padding: 0 7px 1px 11px; border: 2px solid #48484b; border-top: 0; border-image: linear-gradient(transparent, #48484b) 1; }
.modes button.on { color: #e09a4c; border-image: linear-gradient(transparent, #d99246) 1; border-bottom-width: 3px; }
.modes i.down { border-width: 8px 4px 0; margin-top: 6px; }
.edition { font: italic 500 26px/46px "Noto Sans", sans-serif; padding-right: 14px; color: #eee; }
.menubar { height: 29px; display: flex; align-items: center; gap: 18px; padding-bottom: 2px; }
.menubar .grip { height: 22px; margin-right: -9px; }

.toolbar { display: flex; align-items: center; height: 46px; }
.toolbar.standard { height: 47px; }
.toolbar > * { flex: none; }
.tools { display: flex; }
.tools button { flex: 1; height: 42px; display: flex; align-items: center; justify-content: center; position: relative; }
.tools svg { width: 30px; height: 30px; flex: none; }
.tools .hot { border: 2px solid #97492a; }
.tools .cold { border: 2px solid #727276; }
.tools .menu { justify-content: flex-start; padding-left: 7px; }
.tools .menu::after { content: ""; position: absolute; right: 6px; bottom: 6px; border-left: 11px solid transparent; border-bottom: 11px solid #e8e8e8; }
.rule { height: 41px; background: linear-gradient(#7e7e82, #7e7e82) 55% 0 / 1px 100% no-repeat; }
.combo { display: flex; align-items: center; height: 28px; margin-right: 4px; padding: 0 7px; border: 1px solid #4c4c50; }
.combo.tall { height: 31px; margin: 0 0 0 2px; border-color: #3c3c40; }
.combo select { flex: 1; }
.combo i.down { border-width: 7px 4px 0; border-top-color: #b4b4b4; }

.work { flex: 1; display: flex; min-height: 0; }
.sidebar { width: 134px; margin-right: 8px; padding: 1px 0 0 1px; display: flex; flex-direction: column; }
.sidebar h2 { height: 29px; background: #1b1b1d; padding-left: 5px; line-height: 30px; }
.library { flex: 1; background: linear-gradient(90deg, #434247, #4b4a4f); display: flex; flex-direction: column; align-items: center; padding-top: 9px; }
figure { width: 110px; text-align: center; line-height: 17px; margin-bottom: 10px; }
figure svg { width: 30px; height: 36px; margin: 0 auto 6px; }
.handle { height: 11px; background: radial-gradient(circle, #ddd 2px, transparent 2px) 34px 3px / 6px 6px; background-repeat: repeat-x; background-clip: content-box; padding: 0 36px; background-color: #434247; }
.shortcut { height: 30px; margin-bottom: 2px; flex: none; border: 1px solid #7c7c80; display: flex; align-items: center; text-align: left; white-space: nowrap; }
.shortcut svg { width: 19px; height: 20px; margin: 0 7px 0 4px; }
.shortcut.on { background: #ff6500; border-color: #ff6500; }
.more { height: 40px; flex: none; display: flex; justify-content: flex-end; padding: 4px 5px 0 0; }
.more svg { width: 14px; height: 24px; }

.drawing { flex: 1; min-width: 0; display: flex; flex-direction: column; }
.viewport { flex: 1; min-height: 0; display: grid; grid-template: 35px 1fr 22px / 35px 1fr 22px; border: 1px solid #a4a4a4; border-right: 3px solid #f2f2f2; border-bottom: 3px solid #f2f2f2; }
.corner { background: #000; padding: 2px 1px 1px 3px; }
.corner svg { width: 31px; height: 31px; border: 2px solid #9a9a9a; }
.viewport > svg { width: 100%; height: 100%; background: #000; overflow: hidden; }
.viewport > .ruler-x { border-bottom: 2px solid #8e8e8e; }
.viewport > .ruler-y { border-right: 2px solid #8e8e8e; }
.viewport text { font: 13px "Liberation Serif", serif; fill: #f0f0f0; }
.viewport text.zero { fill: #b01515; }
.viewport text.zero-y { fill: #1f8f3a; }
.scroll-y { grid-area: 1 / 3 / 3 / 4; background: #414045; display: flex; flex-direction: column; align-items: center; padding: 8px 0; }
.scroll-y b { width: 12px; height: 23px; background: #7b7b7d; margin: auto 0 98px; }
.scroll-y i.down { border-top: 7px solid #96969a; }
.scroll-y .down { flex: none; }
.ruler-x { grid-area: 1 / 2; }
.ruler-y { grid-area: 2 / 1; }
.canvas { grid-area: 2 / 2; }
.mesh { fill: none; stroke: #fff; stroke-width: 1; }
.edge { fill: none; stroke: #fff; stroke-width: 3; }
.gap { fill: none; stroke: #000; stroke-width: 2; }
.speck { fill: none; stroke: #000; stroke-width: 1; }
.scroll-x { grid-area: 3 / 1 / 4 / 3; background: #414045; display: flex; align-items: center; padding: 0 8px; }
.scroll-x b { width: 22px; height: 13px; background: #7b7b7d; margin: 0 auto 0 396px; }
.views { height: 25px; display: flex; }
.views svg { width: 12px; height: 16px; margin: 4px 8px 0 3px; }
.views button { height: 21px; padding-right: 7px; text-align: right; line-height: 20px; border-right: 1px solid #555; border-bottom: 1px solid #444; border-radius: 0 0 5px 8px; }
.views button.on { color: #d9862f; background: linear-gradient(45deg, transparent 14px, #38373b 14px); }
.views button:last-child { padding-right: 22px; font-weight: 700; }

.panel { width: 417px; display: flex; flex-direction: column; padding-left: 7px; background: #37363b; }
.panel h2 { height: 28px; background: #ff6500; display: flex; align-items: center; padding: 0 7px 0 5px; color: #fff1e6; }
.panel h2 span { flex: 1; }
.panel h2 svg { width: 66px; height: 20px; }
.panel-body { flex: 1; min-height: 0; display: flex; }
.panel-main { flex: 1; min-width: 0; display: flex; flex-direction: column; padding: 14px 0 10px 11px; }
.splitter { width: 17px; background: #414045; border: 1px solid #66666a; display: flex; align-items: center; padding-left: 5px; }
.splitter i.next { border-left-color: #ddd; border-width: 4px 0 4px 5px; }
.panel-tools { display: flex; gap: 11px; margin-bottom: 7px; }
.panel-tools div { display: flex; gap: 2px; }
.panel-tools button { width: 33px; height: 34px; border: 1px solid #757579; background: #302f33; }
.panel-tools svg { width: 31px; height: 32px; }
.tablebox { flex: 1; display: flex; flex-direction: column; overflow: hidden; border: 1px solid #7c7c80; border-right: 0; padding: 2px 0 0 2px; background: linear-gradient(90deg, #434247, #4b4a4f); }
table { width: 415px; flex: none; table-layout: fixed; border-collapse: collapse; font: 13px/18px "Liberation Sans", sans-serif; }
.c1 { width: 21px; } .c2 { width: 22px; } .c3 { width: 26px; } .c4 { width: 122px; } .c5 { width: 40px; } .c6 { width: 62px; } .c7 { width: 61px; } .c8 { width: 61px; }
th { height: 26px; background: #2b2a2d; border-top: 2px solid #ccc; border-bottom: 2px solid #ccc; border-right: 1px solid #757579; font-weight: 400; text-align: left; padding: 0 0 0 6px; }
th.name i { float: right; margin: 6px 4px 0 0; }
td { height: 22px; padding: 0; border: 1px solid #6b6b70; }
td svg { width: 20px; height: 20px; margin: 0 auto; }
.filters td { height: 25px; position: relative; }
.filters .dark { background: #2f2e32; padding-left: 5px; white-space: nowrap; overflow: hidden; }
.filters input { width: 90px; }
.filters input::placeholder { color: #9a9a9d; opacity: 1; }
.filters select { width: 40px; }
.filters td svg { position: absolute; right: 3px; top: 2px; }
.filters i.down { position: absolute; right: 10px; top: 11px; border-width: 5px 4px 0; }
.faint { color: #8a8a8e; }
tbody td.name { padding-left: 5px; }
tbody .bare, tbody tr:not(.head) .fold { border-color: transparent; }
tbody .head td:not(.bare) { background: #29282b; }
tbody .current td:not(.bare):not(.fold) { background: #b94700; }
tbody .current .name { color: #ffd0ae; }
.swatch i { display: block; height: 17px; margin: 0 2px; border: 1px solid #111; }
.white { background: #fff; }
.magenta { background: #ff00f0; }
.blue { background: #0000f4; }
.hatch { background: repeating-linear-gradient(45deg, #777 0 1px, transparent 1px 6px), repeating-linear-gradient(-45deg, #777 0 1px, #fff 1px 6px); }
.panel-scroll { margin-top: auto; height: 24px; display: flex; align-items: center; padding-left: 7px; background: #414045; }
.panel-scroll b { width: 285px; height: 13px; background: #7c7c7e; margin-left: 7px; }
.panel-tabs { height: 29px; display: flex; border-top: 1px solid #55555a; border-bottom: 1px solid #434347; background: #2e2d30; }
.panel-tabs button { width: 118px; height: 27px; padding-left: 6px; text-align: left; white-space: nowrap; }
.panel-tabs button.on { width: 114px; padding: 0 0 3px 6px; border: 1px solid #8a8a8e; border-top: 0; color: #dd8a3b; }
.panel-foot { height: 26px; background: #2e2d30; margin-left: -7px; margin-right: -39px; display: flex; justify-content: flex-end; align-items: center; padding-right: 10px; }
.panel-foot svg { width: 12px; height: 16px; }
.strip { width: 39px; display: flex; padding-top: 9px; gap: 4px; }
.strip button { width: 28px; height: 157px; writing-mode: vertical-rl; font: 16px/28px "Liberation Sans", sans-serif; white-space: nowrap; }
.strip i { flex: 1; height: 157px; background: #434247; }

.status { height: 24px; background: #79797a; display: flex; align-items: center; color: #f2f2f2; white-space: nowrap; }
.status span { flex: none; }
.status .ready { flex: 1; padding-left: 5px; }
.status .faint { color: #58585a; }
.taskbar { height: 50px; background: #3c3c3c; display: flex; align-items: center; gap: 4px; }
.start { width: 62px; padding-left: 14px; }
.start svg { width: 35px; height: 34px; }
.task { width: 75px; height: 48px; display: flex; align-items: center; justify-content: center; background: #595959; border: 1px solid #8a8a8a; }
.task svg { width: 42px; height: 38px; }
.task.on { background: #8e8e8e; border-color: #e2e2e2; }
.task.on svg { height: 28px; }
.tray { margin-left: auto; display: flex; align-items: center; gap: 7px; }
.tray svg { width: 24px; height: 24px; }
time { width: 88px; margin: 0 17px 0 6px; display: flex; flex-direction: column; align-items: center; line-height: 22px; padding-top: 3px; }
.callout { position: absolute; right: 0; top: 0; width: 800px; height: 1000px; pointer-events: none; fill: none; stroke: #fff; stroke-width: 3; }
</style>
